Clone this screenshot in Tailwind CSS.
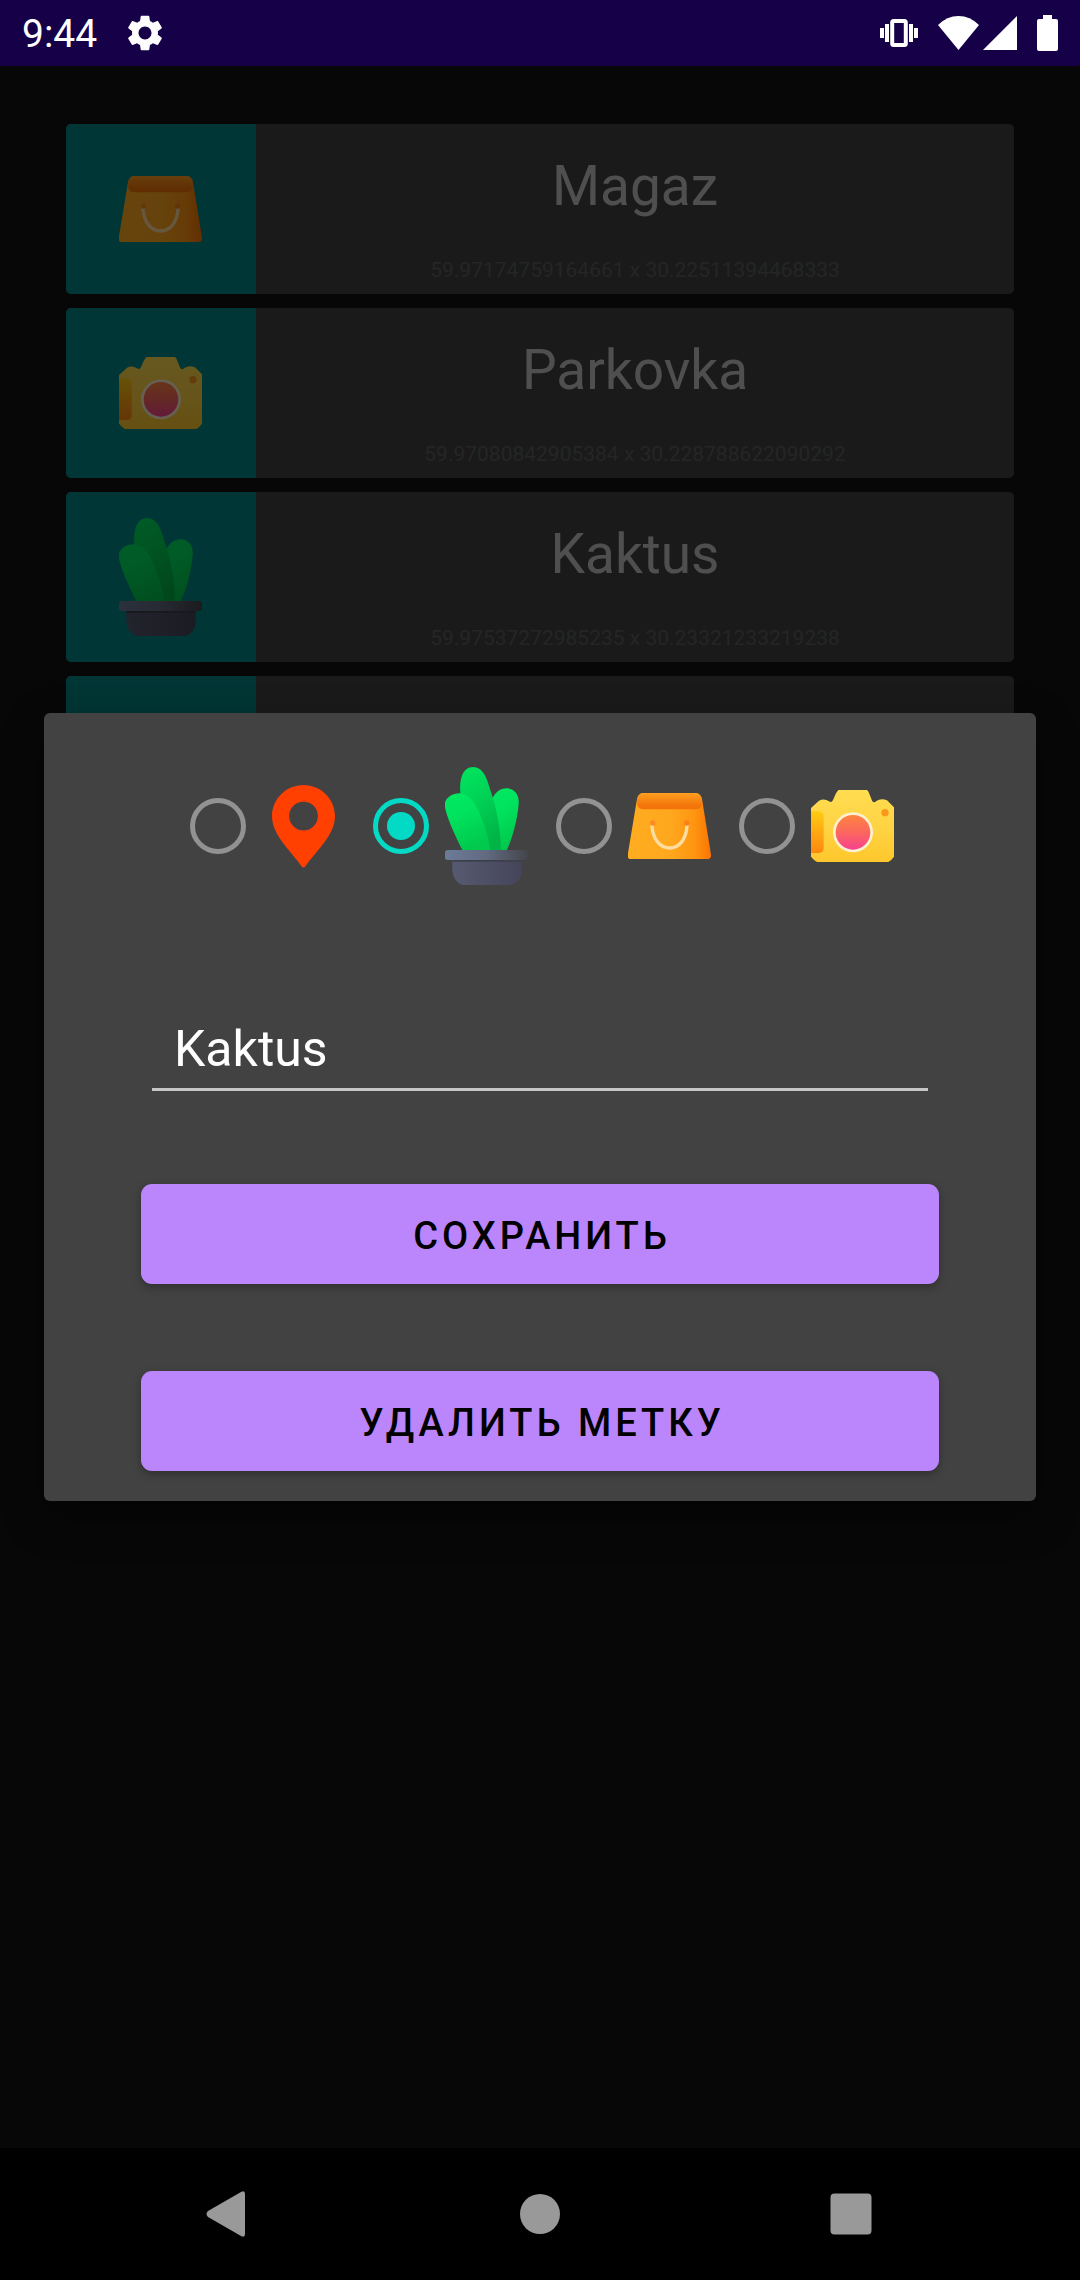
<!DOCTYPE html>
<html lang="ru">
<head>
<meta charset="utf-8">
<meta name="viewport" content="width=device-width, initial-scale=1">
<title>Kaktus</title>
<script src="https://cdn.jsdelivr.net/npm/@tailwindcss/browser@4"></script>
</head>
<body class="flex min-h-screen flex-col bg-[#121212] font-[Roboto,sans-serif]">

<!-- Marker icons shared by the list and the dialog -->
<svg class="absolute size-0" aria-hidden="true">
  <defs>
    <linearGradient id="bag-body" x1="0" x2="1" y1="0" y2="0"><stop offset="0" stop-color="#ffac20"/><stop offset=".5" stop-color="#ffa81e"/><stop offset=".8" stop-color="#ff9511"/><stop offset="1" stop-color="#f97404"/></linearGradient>
    <linearGradient id="bag-flap" x1="0" x2="0" y1="0" y2="1"><stop offset="0" stop-color="#ff9f20"/><stop offset=".7" stop-color="#f4780c"/><stop offset="1" stop-color="#f27009"/></linearGradient>
    <linearGradient id="cam-body" x1="0" x2="0" y1="0" y2="1"><stop offset="0" stop-color="#ffdd50"/><stop offset=".5" stop-color="#ffd444"/><stop offset="1" stop-color="#fec72c"/></linearGradient>
    <linearGradient id="cam-grip" x1="0" x2="0" y1="0" y2="1"><stop offset="0" stop-color="#ffcc12"/><stop offset="1" stop-color="#ff8610"/></linearGradient>
    <linearGradient id="cam-lens" x1="0" x2="0" y1="0" y2="1"><stop offset="0" stop-color="#ff8440"/><stop offset=".5" stop-color="#fb675e"/><stop offset="1" stop-color="#f8418f"/></linearGradient>
    <linearGradient id="leaf" x1="0" x2=".3" y1="0" y2="1"><stop offset="0" stop-color="#00e962"/><stop offset=".4" stop-color="#00e35e"/><stop offset="1" stop-color="#00c94e"/></linearGradient>
    <linearGradient id="leaf-mid" x1="0" x2=".3" y1="0" y2="1"><stop offset="0" stop-color="#00e660"/><stop offset=".45" stop-color="#00d356"/><stop offset="1" stop-color="#00b446"/></linearGradient>
    <linearGradient id="rim" x1="0" x2="1" y1="0" y2="0"><stop offset="0" stop-color="#6c7b99"/><stop offset=".5" stop-color="#626a80"/><stop offset="1" stop-color="#44454b"/></linearGradient>
    <linearGradient id="pot" x1="0" x2="1" y1="0" y2="0"><stop offset="0" stop-color="#565a70"/><stop offset="1" stop-color="#45455a"/></linearGradient>
  </defs>
  <symbol id="bag" viewBox="0 0 249 198">
    <path fill="url(#bag-body)" d="M44 0H204Q217 2 222 18L249 185V192L243 198H4L0 194V180L27 18Q32 2 44 0Z"/>
    <path fill="url(#bag-flap)" d="M44 0H204Q217 2 222 18L221 36Q218 49 204 49H46Q32 49 28 36L27 18Q32 2 44 0Z"/>
    <path fill="none" stroke="#ffdda0" stroke-width="10" stroke-linecap="round" d="M72 98C74 140 98 165 125 165S175 140 177 98"/>
    <circle cx="74" cy="90" r="8" fill="#ff8b20"/><circle cx="176" cy="90" r="8" fill="#fb8114"/>
  </symbol>
  <symbol id="camera" viewBox="0 0 249 216">
    <path fill="url(#cam-body)" d="M82 0H168Q173 4 176 14L184 34Q190 40 196 33Q210 24 228 31L249 52V200Q242 210 232 216H18Q8 210 0 200V54L24 32Q40 24 54 34Q62 39 66 30L75 10Z"/>
    <path fill="url(#cam-grip)" d="M0 64H24Q38 66 38 80V174Q38 188 24 189H0Z"/>
    <circle cx="126" cy="127" r="60" fill="#fff0d0"/>
    <circle cx="126" cy="127" r="52" fill="url(#cam-lens)"/>
    <circle cx="222" cy="68" r="11" fill="#f8981c"/>
  </symbol>
  <symbol id="cactus" viewBox="0 0 249 354">
    <path fill="url(#leaf)" d="M140 100C148 78 165 64 185 64C210 64 224 85 221 112C217 162 200 220 183 256H150Z"/>
    <path fill="url(#leaf-mid)" d="M48 90C40 40 52 0 85 0C112 0 125 30 133 60L146 100C162 160 168 210 168 256H70Z"/>
    <path fill="url(#leaf)" d="M0 106C5 90 25 78 45 79C75 81 94 112 108 150C125 190 134 226 136 256H56C35 215 10 165 0 122Z"/>
    <path fill="url(#pot)" d="M22 276H230V312Q228 344 200 354H52Q26 344 22 312Z"/>
    <path fill="#3e3f4c" d="M22 276H230V284H22Z"/>
    <rect y="249" width="249" height="30" rx="8" fill="url(#rim)"/>
  </symbol>
  <symbol id="pin" viewBox="-30 0 249 249">
    <path fill="#ff4000" fill-rule="evenodd" d="M94.500 0C42 0 0 42 0 94C0 152 62 204 88 243Q94.500 252 101 243C127 204 189 152 189 94C189 42 147 0 94.500 0ZM94.500 50A43 43 0 1 1 94.500 136A43 43 0 1 1 94.500 50Z"/>
  </symbol>
</svg>

<header class="flex h-[66px] shrink-0 items-center justify-between bg-[#160048] px-[22px] text-white">
  <div class="flex items-center gap-[30px]">
    <time class="pt-[2px] text-[39px] leading-[48px]">9:44</time>
    <svg class="size-[36px]" viewBox="2 2 20 20" fill="currentColor" aria-hidden="true"><path d="M19.14 12.94c.04-.3.06-.61.06-.94 0-.32-.02-.64-.07-.94l2.030-1.580c.18-.14.23-.41.12-.61l-1.920-3.320c-.12-.22-.37-.29-.59-.22l-2.390.96c-.5-.38-1.030-.7-1.620-.94l-.36-2.540c-.04-.24-.24-.41-.48-.41h-3.840c-.24 0-.43.17-.47.41l-.36 2.540c-.59.24-1.130.57-1.620.94l-2.390-.96c-.22-.08-.47 0-.59.22L2.740 8.870c-.12.21-.08.47.12.61l2.030 1.580c-.05.3-.09.63-.09.94s.02.64.07.94l-2.030 1.580c-.18.14-.23.41-.12.61l1.920 3.320c.12.22.37.29.59.22l2.390-.96c.5.38 1.030.7 1.620.94l.36 2.540c.05.24.24.41.48.41h3.840c.24 0 .44-.17.47-.41l.36-2.540c.59-.24 1.130-.56 1.620-.94l2.390.96c.22.08.47 0 .59-.22l1.920-3.320c.12-.22.07-.47-.12-.61l-2.010-1.580zM12 15.600c-1.980 0-3.600-1.620-3.600-3.600s1.620-3.600 3.600-3.600 3.600 1.620 3.600 3.600-1.620 3.600-3.600 3.600z"/></svg>
  </div>
  <div class="flex items-center gap-5">
    <svg class="h-[28px] w-[38px]" viewBox="0 0 38 28" fill="currentColor" aria-hidden="true"><path d="M0 9h4v10H0zM5 5h4v18H5zM29 5h4v18h-4zM34 9h4v10h-4z"/><rect x="12.200" y="2" width="13.600" height="24" rx="1.500" fill="none" stroke="currentColor" stroke-width="4"/></svg>
    <div class="flex items-center gap-1">
      <svg class="h-[34px] w-[41px]" viewBox="0 0 41 34" fill="currentColor" aria-hidden="true"><path d="M0 9Q9 0 20.500 0T41 9L20.500 34Z"/></svg>
      <svg class="size-[34px]" viewBox="0 0 34 34" fill="currentColor" aria-hidden="true"><path d="M34 0V34H0Z"/></svg>
    </div>
    <svg class="h-[36px] w-[21px]" viewBox="0 0 21 36" fill="currentColor" aria-hidden="true"><path d="M6 0H15V4H19Q21 4 21 6V34Q21 36 19 36H2Q0 36 0 34V6Q0 4 2 4H6Z"/></svg>
  </div>
</header>

<main class="relative flex-1">
  <ul class="flex flex-col gap-[14px] px-[66px] pt-[58px]">
    <li class="flex overflow-hidden rounded-[5px] bg-[#424242]">
      <div class="flex w-[190px] shrink-0 items-center justify-center bg-[#018786] pr-px"><svg class="h-[66px] w-[83px]" aria-hidden="true"><use href="#bag"/></svg></div>
      <div class="flex flex-1 flex-col items-center gap-[39px] pt-[30px] pb-[11px]">
        <h2 class="text-[55px] leading-[64px] text-[#c6c6c6]">Magaz</h2>
        <p class="text-[21px] leading-[26px] text-[#5a5f5f]">59.97174759164661 x 30.22511394468333</p>
      </div>
    </li>
    <li class="flex overflow-hidden rounded-[5px] bg-[#424242]">
      <div class="flex w-[190px] shrink-0 items-center justify-center bg-[#018786] pr-px"><svg class="h-[72px] w-[83px]" aria-hidden="true"><use href="#camera"/></svg></div>
      <div class="flex flex-1 flex-col items-center gap-[39px] pt-[30px] pb-[11px]">
        <h2 class="text-[55px] leading-[64px] text-[#c6c6c6]">Parkovka</h2>
        <p class="text-[21px] leading-[26px] text-[#5a5f5f]">59.97080842905384 x 30.228788622090292</p>
      </div>
    </li>
    <li class="flex overflow-hidden rounded-[5px] bg-[#424242]">
      <div class="flex w-[190px] shrink-0 items-center justify-center bg-[#018786] pr-px"><svg class="h-[118px] w-[83px]" aria-hidden="true"><use href="#cactus"/></svg></div>
      <div class="flex flex-1 flex-col items-center gap-[39px] pt-[30px] pb-[11px]">
        <h2 class="text-[55px] leading-[64px] text-[#c6c6c6]">Kaktus</h2>
        <p class="text-[21px] leading-[26px] text-[#5a5f5f]">59.97537272985235 x 30.23321233219238</p>
      </div>
    </li>
    <li class="flex h-[170px] overflow-hidden rounded-[5px] bg-[#424242]">
      <div class="w-[190px] shrink-0 bg-[#018786]"></div>
    </li>
  </ul>

  <div class="absolute inset-0 flex items-center bg-black/60 px-[44px]">
    <form role="dialog" aria-label="Kaktus" class="flex w-full flex-col rounded-[6px] bg-[#424242] px-[97px] pt-[54px] pb-[30px] shadow-[0_16px_40px_rgba(0,0,0,0.4)]">
      <div class="flex items-center justify-center">
        <label class="flex items-center pr-3">
          <input type="radio" name="icon" aria-label="Pin" class="mx-4 grid size-[56px] appearance-none place-items-center rounded-full border-[5px] border-[#929292] before:size-7 before:rounded-full checked:border-[#03dac5] checked:before:bg-[#03dac5]">
          <svg class="size-[83px]" aria-hidden="true"><use href="#pin"/></svg>
        </label>
        <label class="flex items-center pr-3">
          <input type="radio" name="icon" aria-label="Cactus" checked class="mx-4 grid size-[56px] appearance-none place-items-center rounded-full border-[5px] border-[#929292] before:size-7 before:rounded-full checked:border-[#03dac5] checked:before:bg-[#03dac5]">
          <svg class="h-[118px] w-[83px]" aria-hidden="true"><use href="#cactus"/></svg>
        </label>
        <label class="flex items-center pr-3">
          <input type="radio" name="icon" aria-label="Bag" class="mx-4 grid size-[56px] appearance-none place-items-center rounded-full border-[5px] border-[#929292] before:size-7 before:rounded-full checked:border-[#03dac5] checked:before:bg-[#03dac5]">
          <svg class="h-[66px] w-[83px]" aria-hidden="true"><use href="#bag"/></svg>
        </label>
        <label class="flex items-center pr-3">
          <input type="radio" name="icon" aria-label="Camera" class="mx-4 grid size-[56px] appearance-none place-items-center rounded-full border-[5px] border-[#929292] before:size-7 before:rounded-full checked:border-[#03dac5] checked:before:bg-[#03dac5]">
          <svg class="h-[72px] w-[83px]" aria-hidden="true"><use href="#camera"/></svg>
        </label>
      </div>
      <input type="text" value="Kaktus" aria-label="Name" class="mx-[11px] mt-[134px] h-[72px] border-b-[3px] border-[#c6c6c6] px-[22px] pb-[9px] text-[50px] leading-[60px] text-white outline-none">
      <button type="submit" class="mt-[93px] h-[100px] rounded-[11px] bg-[#bb86fc] pt-1 pl-1 text-[38px] font-medium tracking-[4px] text-black shadow-[0_3px_8px_rgba(0,0,0,0.3)]">СОХРАНИТЬ</button>
      <button type="button" class="mt-[87px] h-[100px] rounded-[11px] bg-[#bb86fc] pt-1 pl-1 text-[38px] font-medium tracking-[4px] text-black shadow-[0_3px_8px_rgba(0,0,0,0.3)]">УДАЛИТЬ МЕТКУ</button>
    </form>
  </div>
</main>

<nav class="grid h-[132px] shrink-0 grid-cols-3 bg-black px-[73px] text-[#999999]">
  <button type="button" aria-label="Back" class="flex items-center justify-center"><svg class="size-[66px]" viewBox="0 0 66 66" fill="currentColor" aria-hidden="true"><path d="M45 11Q49 9 49 13V53Q49 57 45 55L12 36Q9 33 12 30Z"/></svg></button>
  <button type="button" aria-label="Home" class="flex items-center justify-center"><svg class="size-[66px]" viewBox="0 0 66 66" fill="currentColor" aria-hidden="true"><circle cx="33" cy="33" r="20"/></svg></button>
  <button type="button" aria-label="Recents" class="flex items-center justify-center"><svg class="size-[66px]" viewBox="0 0 66 66" fill="currentColor" aria-hidden="true"><rect x="12.500" y="12.500" width="41" height="41" rx="4"/></svg></button>
</nav>
</body>
</html>
